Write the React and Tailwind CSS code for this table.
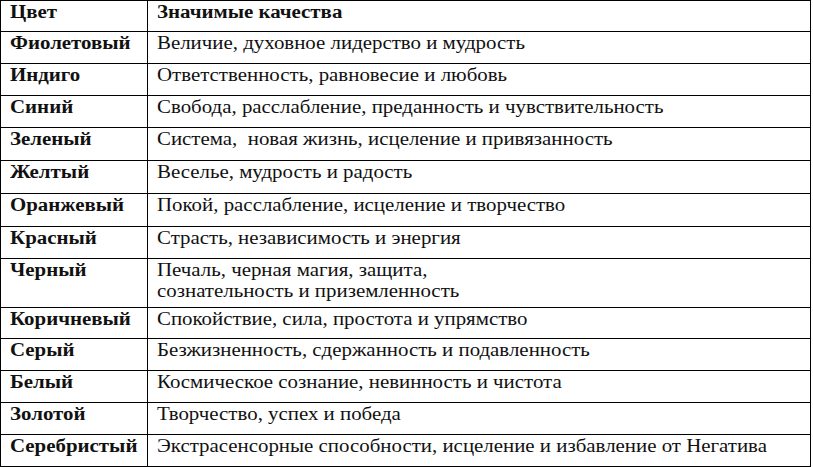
import React from 'react';

// Таблица значений цветов
const rows = [
  { color: 'Фиолетовый', meaning: ['Величие, духовное лидерство и мудрость'], h: 'h-[32px]' },
  { color: 'Индиго', meaning: ['Ответственность, равновесие и любовь'], h: 'h-[32px]' },
  { color: 'Синий', meaning: ['Свобода, расслабление, преданность и чувствительность'], h: 'h-[32px]' },
  { color: 'Зеленый', meaning: ['Система,\u00a0 новая жизнь, исцеление и привязанность'], h: 'h-[33px]' },
  { color: 'Желтый', meaning: ['Веселье, мудрость и радость'], h: 'h-[33px]' },
  { color: 'Оранжевый', meaning: ['Покой, расслабление, исцеление и творчество'], h: 'h-[33px]' },
  { color: 'Красный', meaning: ['Страсть, независимость и энергия'], h: 'h-[32px]' },
  { color: 'Черный', meaning: ['Печаль, черная магия, защита,', 'сознательность и приземленность'], h: 'h-[49px]' },
  { color: 'Коричневый', meaning: ['Спокойствие, сила, простота и упрямство'], h: 'h-[31px]' },
  { color: 'Серый', meaning: ['Безжизненность, сдержанность и подавленность'], h: 'h-[32px]' },
  { color: 'Белый', meaning: ['Космическое сознание, невинность и чистота'], h: 'h-[32px]' },
  { color: 'Золотой', meaning: ['Творчество, успех и победа'], h: 'h-[32px]' },
  { color: 'Серебристый', meaning: ['Экстрасенсорные способности, исцеление и избавление от Негатива'], h: 'h-[32px]' },
];

// the source scan is stretched horizontally, so the text is widened a little
const Line = ({ children }) => (
  <div>
    <span className="inline-block origin-left scale-x-[1.16] whitespace-nowrap">{children}</span>
  </div>
);

const Cell = ({ children, className = '' }) => (
  <div className={`border-b border-black pl-[9px] pt-[1px] overflow-hidden ${className}`}>{children}</div>
);

export default function App() {
  return (
    <div className="w-[813px] h-[467px] bg-white font-['Liberation_Serif',serif]">
      <div className="w-[811px] border-l border-t border-r border-black grid grid-cols-[147px_1fr] text-[18px] leading-[21px] text-[#111]">
        <Cell className="h-[31px] border-r font-bold">
          <Line>Цвет</Line>
        </Cell>
        <Cell className="h-[31px] font-bold">
          <Line>Значимые качества</Line>
        </Cell>
        {rows.map((row) => (
          <React.Fragment key={row.color}>
            <Cell className={`${row.h} border-r font-bold`}>
              <Line>{row.color}</Line>
            </Cell>
            <Cell className={row.h}>
              {row.meaning.map((line) => (
                <Line key={line}>{line}</Line>
              ))}
            </Cell>
          </React.Fragment>
        ))}
      </div>
    </div>
  );
}
